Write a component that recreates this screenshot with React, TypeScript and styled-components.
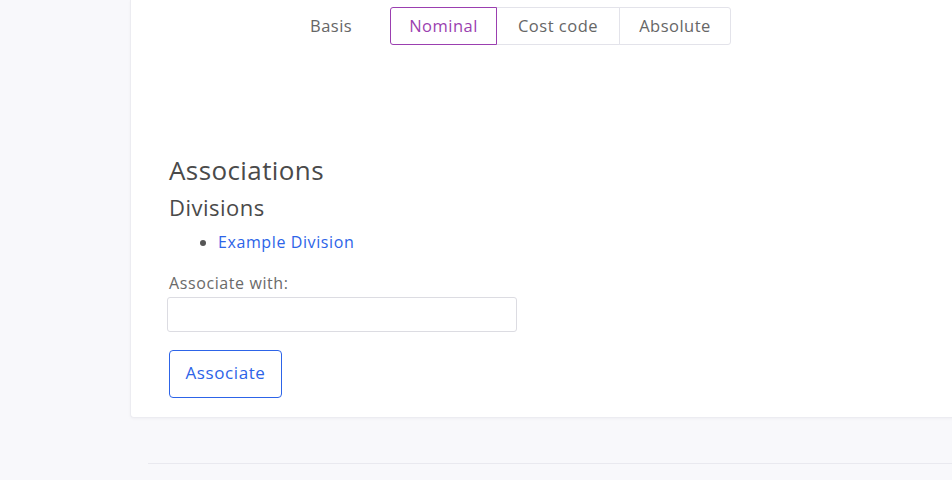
import React from "react";
import styled, { createGlobalStyle } from "styled-components";

const Global = createGlobalStyle`
  html, body { margin: 0; padding: 0; }
  body {
    background: #f8f8fb;
    font-family: "Open Sans", "Noto Sans", sans-serif;
    overflow: hidden;
  }
`;

const Page = styled.div`
  width: 952px;
  height: 480px;
  overflow: hidden;
  display: flex;
  flex-direction: column;
`;

const Card = styled.div`
  margin-left: 130px;
  margin-right: -20px;
  background: #fff;
  border: 1px solid #ececf1;
  border-top: none;
  border-radius: 0 0 4px 4px;
  box-shadow: 0 1px 3px rgba(30, 30, 60, 0.04);
  padding: 7px 0 19px 38px;
`;

const BasisRow = styled.div`
  display: flex;
  align-items: center;
  padding-left: 141px;
  height: 38px;
`;

const BasisLabel = styled.span`
  font-size: 16.5px;
  letter-spacing: 0.5px;
  color: #666;
  width: 80px;
  padding-bottom: 2px;
`;

const Segmented = styled.div`
  display: flex;
`;

const SegButton = styled.button<{ $active?: boolean; $w: number }>`
  font-family: inherit;
  font-size: 16.5px;
  letter-spacing: 0.5px;
  height: 38px;
  width: ${(p) => p.$w}px;
  background: #fff;
  color: ${(p) => (p.$active ? "#9b3fb0" : "#666")};
  border: 1px solid ${(p) => (p.$active ? "#9b3fb0" : "#e3e3ea")};
  margin-left: -1px;
  position: relative;
  z-index: ${(p) => (p.$active ? 1 : 0)};
  padding: 0 0 2px;
  &:first-child { border-radius: 3px 0 0 3px; margin-left: 0; }
  &:last-child { border-radius: 0 3px 3px 0; }
`;

const Section = styled.div`
  margin-top: 108px;
  display: flex;
  flex-direction: column;
  align-items: flex-start;
`;

const H3 = styled.h3`
  margin: 0;
  font-weight: 400;
  font-size: 26px;
  letter-spacing: 0.4px;
  line-height: 34px;
  color: #4a4a4a;
`;

const H4 = styled.h4`
  margin: 5px 0 0;
  font-weight: 400;
  font-size: 22px;
  letter-spacing: 0.5px;
  line-height: 30px;
  color: #4a4a4a;
`;

const List = styled.ul`
  margin: 9px 0 0;
  padding-left: 49px;
  color: #555;
  font-size: 16px;
  letter-spacing: 0.6px;
  line-height: 22px;
`;

const Item = styled.li``;

const Link = styled.a`
  color: #2d64e8;
  text-decoration: none;
`;

const Label = styled.label`
  margin-top: 19px;
  font-size: 16px;
  letter-spacing: 0.6px;
  line-height: 22px;
  color: #6a6a6a;
`;

const Input = styled.input`
  margin: 3px 0 0 -2px;
  width: 350px;
  height: 35px;
  box-sizing: border-box;
  border: 1px solid #dcdce2;
  border-radius: 3px;
  background: #fff;
`;

const Button = styled.button`
  margin-top: 18px;
  font-family: inherit;
  font-size: 17px;
  letter-spacing: 0.6px;
  color: #2d64e8;
  background: #fff;
  border: 1px solid #2d64e8;
  border-radius: 4px;
  width: 113px;
  height: 48px;
  padding: 0 0 3px;
`;

const Footer = styled.div`
  margin: 45px 0 0 148px;
  border-top: 1px solid #e9e9ef;
`;

export default function App() {
  return (
    <Page>
      <Global />
      <Card>
        <BasisRow>
          <BasisLabel>Basis</BasisLabel>
          <Segmented>
            <SegButton $active $w={107}>Nominal</SegButton>
            <SegButton $w={124}>Cost code</SegButton>
            <SegButton $w={112}>Absolute</SegButton>
          </Segmented>
        </BasisRow>
        <Section>
          <H3>Associations</H3>
          <H4>Divisions</H4>
          <List>
            <Item>
              <Link href="#">Example Division</Link>
            </Item>
          </List>
          <Label>Associate with:</Label>
          <Input type="text" />
          <Button>Associate</Button>
        </Section>
      </Card>
      <Footer />
    </Page>
  );
}
